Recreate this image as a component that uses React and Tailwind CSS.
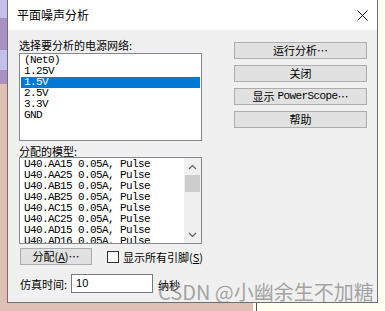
import React from "react";

const cjk = { fontFamily: '"Noto Sans CJK SC", "Noto Sans", sans-serif' };
const mono = { fontFamily: '"Liberation Mono", "DejaVu Sans Mono", monospace' };

function Btn({ children, className = "" }) {
  return (
    <div
      className={`h-[17px] shrink-0 bg-[#e1e1e1] border border-[#adadad] flex items-center justify-center text-[11px] leading-[11px] text-black whitespace-nowrap ${className}`}
      style={cjk}
    >
      {children}
    </div>
  );
}

const nets = ["(Net0)", "1.25V", "1.5V", "2.5V", "3.3V", "GND"];
const models = [
  "U40.AA15 0.05A, Pulse",
  "U40.AA25 0.05A, Pulse",
  "U40.AB15 0.05A, Pulse",
  "U40.AB25 0.05A, Pulse",
  "U40.AC15 0.05A, Pulse",
  "U40.AC25 0.05A, Pulse",
  "U40.AD15 0.05A, Pulse",
  "U40.AD16 0.05A, Pulse",
];

export default function App() {
  return (
    <div className="w-[385px] h-[311px] flex overflow-hidden relative bg-[#fffef0]">
      {/* left background strip */}
      <div className="w-[7px] flex flex-col">
        <div className="h-[18px] bg-[#c4c0ea]" />
        <div className="h-[32px] bg-[#a890c2]" />
        <div className="h-[20px] bg-[#c4c0ea]" />
        <div className="h-[14px] bg-[#a890c2]" />
        <div className="flex-1 bg-[#dfc0b4]" />
      </div>

      {/* dialog column */}
      <div className="w-[371px] flex flex-col">
        <div className="h-[303px] border-l border-r border-b border-[#6f6f6f] bg-[#f0f0f0] flex flex-col">
          {/* title bar */}
          <div className="h-[30px] bg-white flex items-center justify-between pl-[9px] pr-[9px] shrink-0">
            <span className="text-[12px] leading-[14px] text-black" style={cjk}>
              平面噪声分析
            </span>
            <svg width="11" height="11" viewBox="0 0 11 11">
              <path d="M0.5 0.5 L10.5 10.5 M10.5 0.5 L0.5 10.5" stroke="#111" strokeWidth="1" />
            </svg>
          </div>

          {/* body */}
          <div className="flex flex-1 pl-[11px] pr-[10px]">
            {/* left column */}
            <div className="w-[183px] flex flex-col pt-[9px]">
              <div className="h-[12px] text-[11px] leading-[12px] text-black whitespace-nowrap" style={cjk}>
                选择要分析的电源网络:
              </div>
              <div className="mt-[2px] h-[88px] border border-[#828790] bg-white pt-px px-px">
                {nets.map((n, i) => (
                  <div
                    key={n}
                    className={`h-[11px] text-[11px] leading-[11px] tracking-[-0.6px] pl-[3px] ${
                      i === 2 ? "bg-[#0078d7] text-white" : "text-black"
                    }`}
                    style={mono}
                  >
                    {n}
                  </div>
                ))}
              </div>

              <div className="mt-[4px] h-[12px] text-[11px] leading-[12px] text-black whitespace-nowrap" style={cjk}>
                分配的模型:
              </div>
              <div className="h-[87px] border border-[#828790] bg-white flex overflow-hidden">
                <div className="flex-1 pt-[1px] pl-[4px] overflow-hidden">
                  {models.map((m) => (
                    <div
                      key={m}
                      className="h-[11px] text-[11px] leading-[11px] tracking-[-0.6px] text-black whitespace-pre"
                      style={mono}
                    >
                      {m}
                    </div>
                  ))}
                </div>
                <div className="w-[17px] bg-[#f0f0f0] flex flex-col">
                  <div className="h-[17px] flex items-center justify-center">
                    <svg width="9" height="6" viewBox="0 0 9 6">
                      <path d="M1 5 L4.5 1.5 L8 5" stroke="#606060" strokeWidth="1.2" fill="none" />
                    </svg>
                  </div>
                  <div className="mx-[1px] h-[17px] bg-[#cdcdcd]" />
                  <div className="flex-1" />
                  <div className="h-[17px] flex items-center justify-center">
                    <svg width="9" height="6" viewBox="0 0 9 6">
                      <path d="M1 1 L4.5 4.5 L8 1" stroke="#606060" strokeWidth="1.2" fill="none" />
                    </svg>
                  </div>
                </div>
              </div>

              {/* assign row */}
              <div className="mt-[4px] flex items-center whitespace-nowrap">
                <Btn className="w-[72px] ml-px">
                  分配(<span className="underline">A</span>)⋯
                </Btn>
                <div className="ml-[15px] w-[12px] h-[12px] shrink-0 border border-[#333] bg-white" />
                <span className="ml-[4px] shrink-0 text-[11px] leading-[12px] text-black whitespace-nowrap" style={cjk}>
                  显示所有引脚(<span className="underline">S</span>)
                </span>
              </div>

              {/* sim time row */}
              <div className="mt-[9px] flex items-center whitespace-nowrap">
                <span className="text-[11px] leading-[12px] text-black ml-px" style={cjk}>
                  仿真时间:
                </span>
                <div
                  className="ml-[4px] w-[82px] h-[19px] shrink-0 border border-[#7a7a7a] bg-white text-[11px] leading-[17px] pl-[4px] text-black"
                  style={{ fontFamily: '"Liberation Sans", Arial, sans-serif' }}
                >
                  10
                </div>
                <span className="ml-[5px] mt-[3px] text-[11px] leading-[12px] text-black" style={cjk}>
                  纳秒
                </span>
              </div>
            </div>

            {/* right column */}
            <div className="flex-1 flex flex-col items-end pt-[12px] gap-[6px]">
              <Btn className="w-[133px]">运行分析⋯</Btn>
              <Btn className="w-[133px]">关闭</Btn>
              <Btn className="w-[133px]">
                显示 <span style={mono} className="tracking-[-0.6px] ml-[3px]">PowerScope</span>⋯
              </Btn>
              <Btn className="w-[133px]">帮助</Btn>
            </div>
          </div>
        </div>

        {/* below dialog */}
        <div className="flex flex-1">
          <div className="w-[246px] bg-[#dfc0b4]" />
          <div className="w-[3px] bg-[#fffef0]" />
          <div className="w-px bg-[#555]" />
          <div className="flex-1 bg-[#fffef0]" />
        </div>
      </div>

      {/* right background strip */}
      <div className="flex-1 bg-[#fffef0]" />

      {/* watermark overlay */}
      <div
        className="absolute left-[158px] top-[280px] text-[20px] leading-[24px] text-[rgba(110,110,110,0.6)] whitespace-nowrap pointer-events-none"
        style={cjk}
      >
        CSDN @小幽余生不加糖
      </div>
    </div>
  );
}
